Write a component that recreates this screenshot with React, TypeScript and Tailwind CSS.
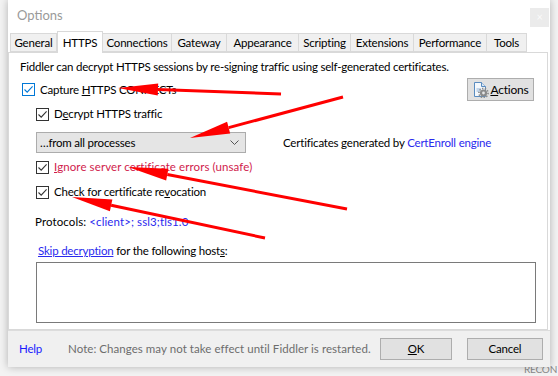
import React from "react";

const FONT = "font-['Lato','Noto_Sans',sans-serif]";

function Check({ blue }: { blue?: boolean }) {
  const c = blue ? "#0078d7" : "#333333";
  return (
    <span
      className={`flex h-[13px] w-[13px] shrink-0 items-center justify-center border bg-white ${
        blue ? "border-[#0078d7]" : "border-[#333333]"
      }`}
    >
      <svg width="11" height="11" viewBox="0 0 11 11">
        <path d="M1.5 5.5 L4.2 8.2 L9.6 2.4" fill="none" stroke={c} strokeWidth="1.1" />
      </svg>
    </span>
  );
}

function Arrow({ x1, y1, x2, y2 }: { x1: number; y1: number; x2: number; y2: number }) {
  // x1,y1 = tail, x2,y2 = tip
  const dx = x2 - x1;
  const dy = y2 - y1;
  const len = Math.hypot(dx, dy);
  const ux = dx / len;
  const uy = dy / len;
  const hl = 40;
  const hw = 6;
  const bx = x2 - ux * hl;
  const by = y2 - uy * hl;
  const pts = `${x2},${y2} ${bx - uy * hw},${by + ux * hw} ${bx + uy * hw},${by - ux * hw}`;
  return (
    <g>
      <line x1={x1} y1={y1} x2={bx} y2={by} stroke="#ff0000" strokeWidth="3" />
      <polygon points={pts} fill="#ff0000" />
    </g>
  );
}

const tabs = ["General", "HTTPS", "Connections", "Gateway", "Appearance", "Scripting", "Extensions", "Performance", "Tools"];
const tabW = [47, 46, 69, 55, 72, 52, 63, 73, 40];

function ActionsIcon() {
  return (
    <svg width="17" height="17" viewBox="0 0 17 17">
      <path d="M2.5 1.5 H9.5 L13.5 5.5 V15.5 H2.5 Z" fill="#f4f8fc" stroke="#5a8cc0" />
      <path d="M9.5 1.5 V5.5 H13.5" fill="#dbe8f5" stroke="#5a8cc0" />
      <path d="M4.5 8 H9 M4.5 10 H8" stroke="#8fb3d9" />
      <circle cx="11.5" cy="12" r="3.6" fill="#8a8a8a" />
      <circle cx="11.5" cy="12" r="4.6" fill="none" stroke="#8a8a8a" strokeWidth="1.6" strokeDasharray="1.4 1.4" />
      <circle cx="11.5" cy="12" r="1.4" fill="#e6e6e6" />
    </svg>
  );
}

export default function App() {
  return (
    <div
      className={`relative h-[376px] w-[558px] overflow-hidden bg-[#f3f3f3] text-[11.5px] tracking-[-0.2px] text-black ${FONT}`}
    >
      <div className="absolute left-[524px] top-[362px] text-[10px] leading-[14px] text-[#8a8a8a]">RECON</div>

      <div className="relative ml-[8px] flex h-[367px] w-[542px] flex-col bg-white shadow-[0_0_8px_rgba(0,0,0,0.28)]">
        {/* title bar */}
        <div className="flex h-[31px] items-start justify-between">
          <span className="ml-[9px] mt-[6px] text-[13px] tracking-normal text-[#9a9a9a]">Options</span>
          <span className="mr-[1px] mt-[8px] flex h-[19px] w-[19px] items-center justify-center bg-[#ebebeb] text-[11px] text-[#fafafa]">
            ×
          </span>
        </div>

        {/* tabs */}
        <div className="flex h-[21px] items-end pl-[2px]">
          {tabs.map((t, i) =>
            t === "HTTPS" ? (
              <div
                key={t}
                style={{ width: tabW[i] }}
                className="relative z-10 -mb-px flex h-[22px] items-center justify-center border border-b-0 border-[#d9d9d9] bg-white"
              >
                {t}
              </div>
            ) : (
              <div
                key={t}
                style={{ width: tabW[i] }}
                className="flex h-[19px] items-center justify-center border border-l-0 border-[#d9d9d9] bg-[#f0f0f0] first:border-l"
              >
                {t}
              </div>
            )
          )}
        </div>

        {/* panel */}
        <div className="mr-[2px] flex h-[278px] flex-col border border-[#d9d9d9] bg-white pl-[11px] pt-[6px]">
          <div className="h-[16px] leading-[16px]">
            Fiddler can decrypt HTTPS sessions by re-signing traffic using self-generated certificates.
          </div>

          <div className="mt-[3px] flex h-[23px] items-center justify-between pr-[13px]">
            <div className="ml-[2px] flex items-center gap-[5px]">
              <Check blue />
              <span>
                Capture <u>H</u>TTPS CONNECTs
              </span>
            </div>
            <div className="flex h-[23px] w-[67px] items-center justify-center gap-[1px] border border-[#adadad] bg-[#e1e1e1]">
              <ActionsIcon />
              <span className="text-[12px]">
                <u>A</u>ctions
              </span>
            </div>
          </div>

          <div className="ml-[16px] mt-[5px] flex h-[16px] items-center gap-[5px]">
            <Check />
            <span>
              D<u>e</u>crypt HTTPS traffic
            </span>
          </div>

          <div className="ml-[16px] mt-[10px] flex h-[21px] items-center">
            <div className="flex h-[21px] w-[210px] items-center justify-between border border-[#acacac] bg-[#e5e5e5] pl-[3px] pr-[6px]">
              <span>…from all processes</span>
              <svg width="9" height="5" viewBox="0 0 9 5">
                <path d="M0.5 0.5 L4.5 4.5 L8.5 0.5" fill="none" stroke="#555" />
              </svg>
            </div>
            <span className="ml-[37px]">
              Certificates generated by <span className="text-[#2a2aee]">CertEnroll engine</span>
            </span>
          </div>

          <div className="ml-[16px] mt-[6px] flex h-[16px] items-center gap-[5px]">
            <Check />
            <span className="tracking-[0.1px] text-[#d01b4c]">
              <u>I</u>gnore server certificate errors (unsafe)
            </span>
          </div>

          <div className="ml-[16px] mt-[9px] flex h-[16px] items-center gap-[5px]">
            <Check />
            <span>
              Check for certificate re<u>v</u>ocation
            </span>
          </div>

          <div className="ml-[15px] mt-[14px] h-[16px] leading-[16px] tracking-[0.1px]">
            Protocols: <span className="text-[#2a2aee]">&lt;client&gt;; ssl3;tls1.0</span>
          </div>

          <div className="ml-[18px] mt-[13px] h-[16px] leading-[16px]">
            <span className="text-[#2a2aee] underline">Skip decryption</span> for the following host<u>s</u>:
          </div>

          <div className="ml-[16px] mt-[3px] h-[61px] w-[500px] border border-[#7a7a7a] bg-white" />
        </div>

        {/* footer */}
        <div className="flex h-[37px] items-center whitespace-nowrap border-t border-[#dcdcdc] bg-[#f0f0f0] pl-[11px]">
          <span className="text-[#1a1aff]">Help</span>
          <span className="ml-[26px] tracking-[0.05px] text-[#6d6d6d]">
            Note: Changes may not take effect until Fiddler is restarted.
          </span>
          <div className="ml-auto flex items-center gap-[15px] pr-[7px]">
            <div className="flex h-[22px] w-[72px] items-center justify-center border border-[#adadad] bg-[#e1e1e1]">
              <span>
                <u>O</u>K
              </span>
            </div>
            <div className="flex h-[22px] w-[76px] items-center justify-center border border-[#adadad] bg-[#e1e1e1]">
              Cancel
            </div>
          </div>
        </div>
      </div>

      {/* red annotation arrows */}
      <svg className="pointer-events-none absolute left-0 top-0" width="558" height="376">
        <Arrow x1={281} y1={94} x2={118} y2={88} />
        <Arrow x1={343} y1={97} x2={190} y2={138} />
        <Arrow x1={347} y1={209} x2={128} y2={167} />
        <Arrow x1={265} y1={238} x2={72} y2={197} />
      </svg>
    </div>
  );
}
